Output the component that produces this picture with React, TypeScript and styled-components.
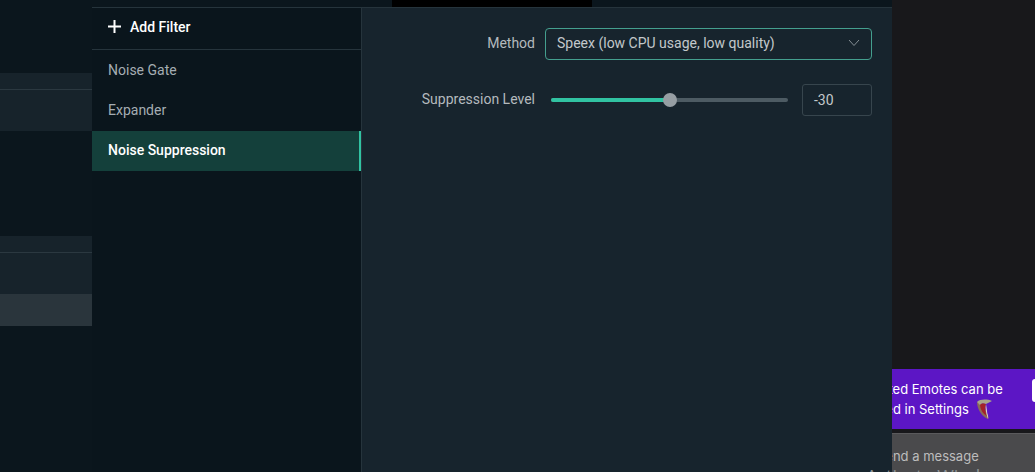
import styled, { createGlobalStyle } from 'styled-components';

const GlobalStyle = createGlobalStyle`
  html, body {
    margin: 0;
    padding: 0;
    width: 1035px;
    height: 472px;
    overflow: hidden;
    background: #18181b;
    font-family: Roboto, "Liberation Sans", sans-serif;
  }
`;

const Screen = styled.div`
  position: relative;
  display: flex;
  width: 1035px;
  height: 472px;
  overflow: hidden;
`;

const Editor = styled.div`
  display: flex;
  flex-direction: column;
  width: 892px;
  flex-shrink: 0;
  background: #0b161d;
`;

const TopStrip = styled.div`
  display: flex;
  height: 7px;
  padding-left: 392px;
  background: #0b161d;
`;

const PreviewEdge = styled.div`
  width: 200px;
  background: #000;
`;

const Body = styled.div`
  display: flex;
  flex: 1;
  min-height: 0;
`;

const SourceStrip = styled.div`
  display: flex;
  flex-direction: column;
  width: 92px;
  flex-shrink: 0;
  padding-top: 66px;
`;

const SourceRow = styled.div<{ $height: number; $tone: string; $line?: boolean; $gap?: number }>`
  box-sizing: border-box;
  height: ${(p) => p.$height}px;
  background: ${(p) => p.$tone};
  border-bottom: ${(p) => (p.$line ? '1px solid #2b3840' : 'none')};
  margin-bottom: ${(p) => p.$gap ?? 0}px;
`;

const FilterList = styled.aside`
  width: 269px;
  flex-shrink: 0;
  background: #0a151c;
  border-top: 1px solid #26343c;
  border-right: 1px solid #26343c;
`;

const AddFilter = styled.div`
  display: flex;
  align-items: center;
  gap: 9px;
  box-sizing: border-box;
  height: 42px;
  margin-bottom: 1px;
  padding: 0 0 4px 16px;
  border-bottom: 1px solid #26343c;
  color: #fff;
  font-size: 14px;
  font-weight: 500;
`;

const FilterItem = styled.div<{ $active?: boolean }>`
  display: flex;
  align-items: center;
  box-sizing: border-box;
  height: 40px;
  padding: 0 0 2px 16px;
  font-size: 14px;
  font-weight: ${(p) => (p.$active ? 500 : 400)};
  color: ${(p) => (p.$active ? '#ffffff' : '#a5adb3')};
  background: ${(p) => (p.$active ? '#14403b' : 'transparent')};
  border-right: 2px solid ${(p) => (p.$active ? '#31c3a2' : 'transparent')};
`;

const Settings = styled.main`
  flex: 1;
  display: flex;
  flex-direction: column;
  gap: 24px;
  padding: 20px 20px 0 0;
  background: #17242d;
  border-top: 1px solid #26343c;
`;

const FormRow = styled.div`
  display: flex;
  align-items: center;
  height: 32px;
`;

const FieldLabel = styled.label`
  width: 173px;
  flex-shrink: 0;
  padding-bottom: 2px;
  text-align: right;
  font-size: 14px;
  color: #b4babe;
`;

const Select = styled.div`
  display: flex;
  align-items: center;
  justify-content: space-between;
  box-sizing: border-box;
  width: 327px;
  height: 32px;
  margin-left: 10px;
  padding: 0 11px 2px;
  border: 1px solid #449f8e;
  border-radius: 4px;
  font-size: 14px;
  color: #c3c8cb;
`;

const Slider = styled.div`
  position: relative;
  width: 237px;
  height: 4px;
  margin-left: 16px;
  border-radius: 2px;
  background: #4d5b63;
`;

const SliderFill = styled.div`
  height: 100%;
  border-radius: 2px;
  background: #31c3a2;
`;

const SliderThumb = styled.div`
  position: absolute;
  top: -5px;
  width: 14px;
  height: 14px;
  margin-left: -7px;
  border-radius: 50%;
  background: #969ea3;
`;

const ValueInput = styled.div`
  display: flex;
  align-items: center;
  box-sizing: border-box;
  width: 70px;
  height: 32px;
  margin-left: 14px;
  padding-left: 11px;
  border: 1px solid #37454d;
  border-radius: 3px;
  font-size: 14px;
  color: #c3c8cb;
`;

const Chat = styled.section`
  flex: 1;
  display: flex;
  flex-direction: column;
  min-width: 0;
  padding-top: 369px;
  background: #18181b;
`;

const Notice = styled.div`
  display: flex;
  align-items: center;
  justify-content: space-between;
  height: 60px;
  overflow: hidden;
  background: #5c16c5;
`;

const NoticeText = styled.div`
  flex-shrink: 0;
  margin-left: -42px;
  color: #fff;
  font-family: Inter, Roboto, sans-serif;
  font-size: 13px;
  line-height: 20px;
  white-space: nowrap;
`;

const ClippedLine = styled.div<{ $inset?: number }>`
  display: flex;
  align-items: center;
  justify-content: flex-end;
  gap: 7px;
  padding-right: ${(p) => p.$inset ?? 0}px;
`;

const NoticeButton = styled.div`
  align-self: flex-start;
  width: 3px;
  height: 23px;
  margin-top: 10px;
  border-radius: 3px 0 0 3px;
  background: #fff;
`;

const MessageBox = styled.div`
  flex: 1;
  margin-top: 4px;
  padding-top: 14px;
  overflow: hidden;
  background: #4a4a4c;
  border-top: 1px solid #5a5a5c;
  color: #bdbdbd;
  font-family: Inter, Roboto, sans-serif;
  font-size: 13px;
  white-space: nowrap;
`;

const MessageText = styled.div`
  margin-left: -15px;
`;

const Watermark = styled.div`
  position: absolute;
  left: 866px;
  top: 464px;
  color: #8d9296;
  font-family: "Open Sans", sans-serif;
  font-size: 18px;
  line-height: 24px;
  white-space: nowrap;
`;

// Animated snake emote, open jaw facing down
const Emote = () => (
  <svg width="16" height="20" viewBox="0 0 16 20">
    <path d="M1 3 C1 9 5 17 12 20 C13 18 11 15 10 12 L4 5Z" fill="#8a6a58" />
    <path d="M4 5 C6 4 9 4 10 5 C9 9 9 13 11 17 C7 15 4 10 4 5Z" fill="#a3222a" />
    <path d="M1 3 C4 0 11 0 16 2 L10 5 C8 4 5 4 4 6Z" fill="#a9a48a" />
    <path d="M10 5 C9 9 10 14 12 20 C13 18 11 15 11 12Z" fill="#e6dacb" />
  </svg>
);

export default function App() {
  return (
    <Screen>
      <GlobalStyle />
      <Editor>
        <TopStrip>
          <PreviewEdge />
        </TopStrip>
        <Body>
          <SourceStrip>
            <SourceRow $height={17} $tone="#17232b" $line />
            <SourceRow $height={41} $tone="#17232b" $gap={105} />
            <SourceRow $height={17} $tone="#17232b" $line />
            <SourceRow $height={41} $tone="#17232b" />
            <SourceRow $height={32} $tone="#2a353c" />
          </SourceStrip>
          <FilterList>
            <AddFilter>
              <svg width="13" height="13" viewBox="0 0 13 13">
                <path d="M6.5 0v13M0 6.5h13" stroke="#fff" strokeWidth="2" />
              </svg>
              Add Filter
            </AddFilter>
            <FilterItem>Noise Gate</FilterItem>
            <FilterItem>Expander</FilterItem>
            <FilterItem $active>Noise Suppression</FilterItem>
          </FilterList>
          <Settings>
            <FormRow>
              <FieldLabel>Method</FieldLabel>
              <Select>
                Speex (low CPU usage, low quality)
                <svg width="12" height="8" viewBox="0 0 12 8">
                  <path d="M1 1l5 5.5L11 1" fill="none" stroke="#848e94" strokeWidth="1" />
                </svg>
              </Select>
            </FormRow>
            <FormRow>
              <FieldLabel>Suppression Level</FieldLabel>
              <Slider>
                <SliderFill style={{ width: '50%' }} />
                <SliderThumb style={{ left: '50%' }} />
              </Slider>
              <ValueInput>-30</ValueInput>
            </FormRow>
          </Settings>
        </Body>
      </Editor>
      <Chat>
        <Notice>
          <NoticeText>
            <ClippedLine>Animated Emotes can be</ClippedLine>
            <ClippedLine $inset={11}>
              Enabled in Settings
              <Emote />
            </ClippedLine>
          </NoticeText>
          <NoticeButton />
        </Notice>
        <MessageBox>
          <MessageText>Send a message</MessageText>
        </MessageBox>
      </Chat>
      <Watermark>Activate Windows</Watermark>
    </Screen>
  );
}
